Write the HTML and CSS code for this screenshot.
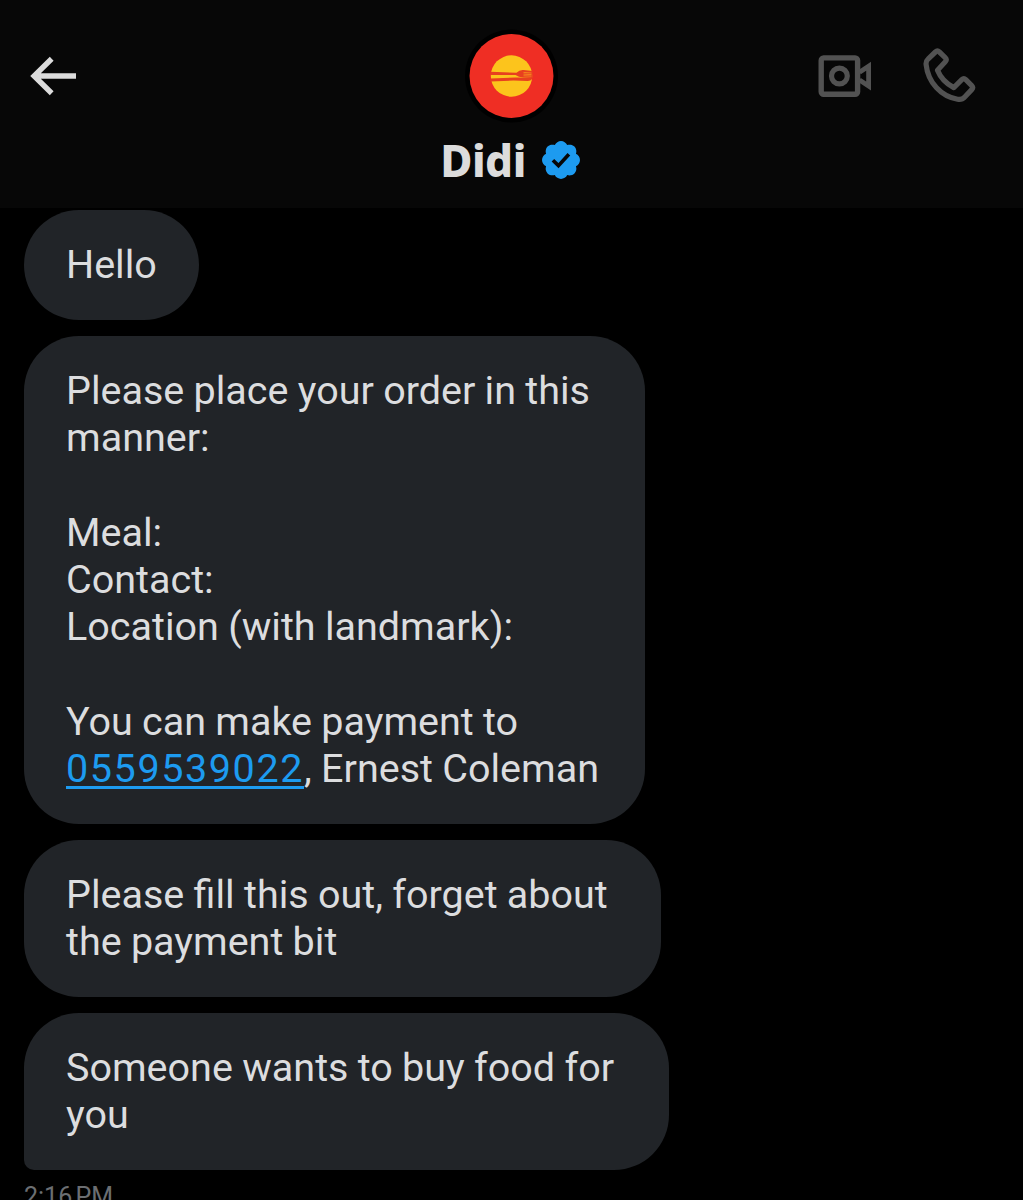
FILE: index.html
```html
<!DOCTYPE html>
<html lang="en">
<head>
    <meta charset="UTF-8">
    <meta name="viewport" content="width=device-width, initial-scale=1.0">
    <title>Didi</title>
    <link rel="stylesheet" href="styles.css">
</head>
<body>

    <header class="header">
        <a href="#" class="back" aria-label="Back">
            <svg width="48" height="42" viewBox="30 55 48 42">
                <path d="M51.7 58.7L34.1 76L51.7 93.3M35 76H76" fill="none" stroke="#dcdcdc" stroke-width="5.4"/>
            </svg>
        </a>

        <div class="profile">
            <svg class="avatar" width="94" height="94" viewBox="-47.5 -47 94 94">
                <circle r="46.5" fill="#000"/>
                <circle r="42" fill="#ef2e24"/>
                <circle r="20.7" fill="#fcc41c"/>
                <!-- fork -->
                <path d="M-21 -4.2L5 -3.2Q8 -6.4 12 -6L21 -5V2L12 1.6Q7 1 4 -1L-21 -.9Z" fill="#e8401f"/>
                <path d="M12 -3.6L20 -3M12 -1.9L20 -1.4M12 -.2L20 .1" stroke="#f9a01e" stroke-width=".7"/>
                <!-- knife -->
                <path d="M-21 2.4L5 1.6L21 1.8Q20 5 16 5L2 4.6L-21 5.6Z" fill="#e8401f"/>
            </svg>
            <div class="name">
                <h1>Didi</h1>
                <svg class="badge" width="38" height="38" viewBox="1.6 1.6 18.8 18.8">
                    <path fill="#1d9bf0" d="M20.396 11c-.018-.646-.215-1.275-.57-1.816-.354-.54-.852-.972-1.438-1.246.223-.607.27-1.264.14-1.897-.131-.634-.437-1.218-.882-1.687-.47-.445-1.053-.75-1.687-.882-.633-.13-1.29-.083-1.897.14-.273-.587-.704-1.086-1.245-1.44S11.647 1.62 11 1.604c-.646.017-1.273.213-1.813.568s-.969.854-1.24 1.44c-.608-.223-1.267-.272-1.902-.14-.635.13-1.22.436-1.69.882-.445.47-.749 1.055-.878 1.688-.13.633-.08 1.29.144 1.896-.587.274-1.087.705-1.443 1.245-.356.54-.555 1.17-.574 1.817.02.647.218 1.276.574 1.817.356.54.856.972 1.443 1.245-.224.606-.274 1.263-.144 1.896.13.634.433 1.218.877 1.688.47.443 1.054.747 1.687.878.633.132 1.29.084 1.897-.136.274.586.705 1.084 1.246 1.439.54.354 1.17.551 1.816.569.647-.016 1.276-.213 1.817-.567s.972-.854 1.245-1.44c.604.239 1.266.296 1.903.164.636-.132 1.22-.447 1.68-.907.46-.46.776-1.044.908-1.681s.075-1.299-.165-1.903c.586-.274 1.084-.705 1.439-1.246.354-.54.551-1.17.569-1.816z"/>
                    <path d="M7 11.1L9.75 13.8L14.9 8.2" fill="none" stroke="#070707" stroke-width="1.8"/>
                </svg>
            </div>
        </div>

        <div class="actions">
            <svg width="54" height="44" viewBox="818 54 54 44" fill="none" stroke="#525252">
                <rect x="821.2" y="57.9" width="36.4" height="36.4" rx="2.5" stroke-width="5.4"/>
                <circle cx="839.4" cy="76" r="7.9" stroke-width="5.2"/>
                <path d="M859.5 72.2L868.6 66.2V86L859.5 80" stroke-width="4.8"/>
            </svg>
            <svg width="54" height="56" viewBox="922 47.6 54 56" fill="none" stroke="#525252" stroke-width="5.2" stroke-linejoin="round">
                <path d="M935.4 51.6Q937.4 49.7 939.4 51.6L945.2 57.3Q947.2 59.3 945.3 61.3L937.5 69.8Q942 81 953.8 87.2L961.8 79.3Q963.8 77.4 965.8 79.3L971.7 85.2Q973.6 87.2 971.7 89.2L964.5 96.8Q962 99.6 957.5 98.8C941 96 928 82 926.1 64Q925.8 60.6 928 58.7Z"/>
            </svg>
        </div>
    </header>

    <main class="messages">
        <div class="bubble hello"><p>Hello</p></div>

        <div class="bubble order">
            <p>Please place your order in this</p>
            <p>manner:</p>
            <br>
            <p>Meal:</p>
            <p>Contact:</p>
            <p>Location (with landmark):</p>
            <br>
            <p>You can make payment to</p>
            <p><a href="tel:0559539022">0559539022</a>, Ernest Coleman</p>
        </div>

        <div class="bubble fill">
            <p>Please fill this out, forget about</p>
            <p>the payment bit</p>
        </div>

        <div class="bubble last">
            <p>Someone wants to buy food for</p>
            <p>you</p>
        </div>

        <time class="time">2:16 PM</time>
    </main>

</body>
</html>
```

FILE: styles.css
```css
body {
    margin: 0;
    height: 1200px;
    overflow: hidden;
    background-color: #000;
    color: #dcdddf;
    font-family: Roboto, "Noto Sans", sans-serif;
}

.header {
    display: grid;
    grid-template-columns: 1fr auto 1fr;
    height: 208px;
    padding: 0 47px 0 30px;
    box-sizing: border-box;
    background-color: #070707;
}

.header svg {
    display: block;
}

.back {
    margin-top: 55px;
}

.profile {
    display: flex;
    flex-direction: column;
    align-items: center;
    padding-top: 29px;
    margin-left: 16px;
}

.name {
    display: flex;
    align-items: center;
    gap: 16px;
    height: 74px;
    margin-left: -2px;
}

h1 {
    margin: 0;
    font-family: "Noto Sans", sans-serif;
    font-size: 44px;
    line-height: 60px;
    font-weight: 800;
    letter-spacing: -0.5px;
    color: #dcdcdc;
}

.actions {
    display: flex;
    justify-content: flex-end;
    align-items: center;
    gap: 50px;
    height: 151px;
}

.messages {
    display: flex;
    flex-direction: column;
    align-items: flex-start;
    gap: 16px;
    padding: 2px 24px 0;
}

/* Bubbles */
.bubble {
    flex: none;
    box-sizing: border-box;
    padding: 31px 0 31.5px 42px;
    border-radius: 55px;
    background-color: #212428;
    font-size: 39.5px;
    line-height: 47.25px;
    word-spacing: -0.5px;
    white-space: nowrap;
}

.bubble p {
    margin: 0;
}

.bubble a {
    color: #1d9bf0;
    letter-spacing: 1.6px;
    text-decoration-thickness: 2.5px;
    text-underline-offset: 4px;
}

.hello {
    width: 175px;
}

.order {
    width: 621px;
}

.fill {
    width: 637px;
}

.last {
    width: 645px;
    border-bottom-left-radius: 10px;
}

.time {
    margin-top: -4px;
    font-size: 25px;
    line-height: 30px;
    word-spacing: -3px;
    color: #6b6e72;
}
```
